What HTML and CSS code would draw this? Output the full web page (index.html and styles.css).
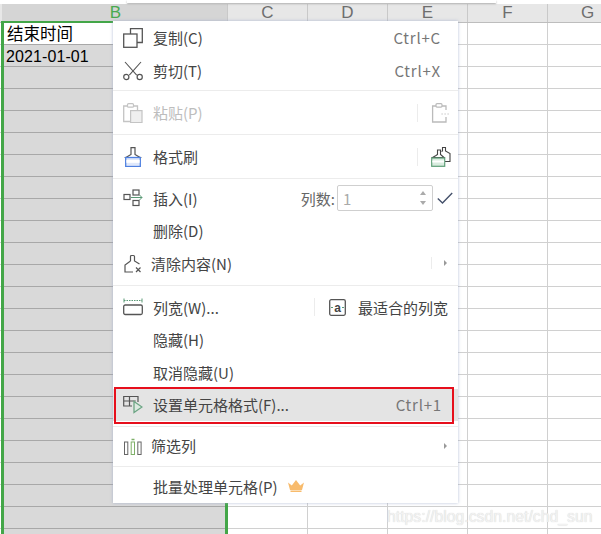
FILE: index.html
```html
<!DOCTYPE html>
<html lang="zh-CN">
<head>
<meta charset="utf-8">
<title>Sheet</title>
<link rel="stylesheet" href="styles.css">
</head>
<body>
<div class="app">
  <div class="topbar"><div class="dialog-edge"></div></div>
  <div class="headers">
    <div class="hd hd-a"></div>
    <div class="hd hd-b">B</div>
    <div class="hd">C</div>
    <div class="hd">D</div>
    <div class="hd">E</div>
    <div class="hd">F</div>
    <div class="hd">G</div>
  </div>
  <div class="sheet">
    <div class="col col-a"></div>
    <div class="col col-b">
      <div class="cell cell-head">结束时间</div>
      <div class="cell cell-date">2021-01-01</div>
    </div>
    <div class="col"></div>
    <div class="col"></div>
    <div class="col"></div>
    <div class="col"></div>
    <div class="col"></div>
  </div>

  <div class="menu">
    <div class="group g1">
      <div class="item">
        <svg class="icon" viewBox="0 0 20 20"><path d="M7.500 6V.7h11.800v13.800H14" fill="none" stroke="#555" stroke-width="1.300"/><rect x=".7" y="6" width="13.300" height="13.300" fill="#fff" stroke="#555" stroke-width="1.300"/></svg>
        <span class="label">复制(C)</span><span class="key">Ctrl+C</span>
      </div>
      <div class="item">
        <svg class="icon" viewBox="0 0 20 20"><path d="M2 1l11.700 13.200M18 1L6.300 14.200" fill="none" stroke="#555" stroke-width="1.100"/><circle cx="3.300" cy="16" r="2.600" fill="none" stroke="#555" stroke-width="1.200"/><circle cx="16.700" cy="16" r="2.600" fill="none" stroke="#555" stroke-width="1.200"/></svg>
        <span class="label">剪切(T)</span><span class="key">Ctrl+X</span>
      </div>
    </div>
    <div class="group g2">
      <div class="item">
        <svg class="icon" viewBox="0 0 20 20"><path d="M5 3H.7v15.500H7" fill="none" stroke="#c4c4c4" stroke-width="1.300"/><path d="M11 3h3.500v4" fill="none" stroke="#c4c4c4" stroke-width="1.300"/><rect x="4.500" y=".7" width="6" height="3.500" rx="1" fill="#fff" stroke="#c4c4c4" stroke-width="1.200"/><rect x="7.600" y="7.600" width="11.400" height="12" fill="#efefef" stroke="#c4c4c4" stroke-width="1.200"/></svg>
        <span class="label off">粘贴(P)</span>
        <span class="divider paste-div"></span>
        <svg class="icon-r" viewBox="0 0 20 20"><path d="M5 3H1.600v16H15v-5" fill="none" stroke="#bbb" stroke-width="1.300"/><path d="M11 3h4v4" fill="none" stroke="#bbb" stroke-width="1.300"/><rect x="5" y=".7" width="6" height="3.400" rx="1" fill="#fff" stroke="#bbb" stroke-width="1.200"/><path d="M10.500 11h1.200m1.800 0h1.200m1.800 0h1.200" stroke="#bbb" stroke-width="1.200"/></svg>
      </div>
    </div>
    <div class="group g3">
      <div class="item">
        <svg class="icon" viewBox="0 0 20 20"><path d="M8 .7h4v6.800l5 3H3l5-3z" fill="#fff" stroke="#555" stroke-width="1.200"/><rect x="2.700" y="10.500" width="14.600" height="9" fill="#dfe8fb" stroke="#4f80e0" stroke-width="1.300"/><rect x="3.400" y="13" width="13.200" height="2.800" fill="#fff"/></svg>
        <span class="label">格式刷</span>
        <span class="divider paste-div"></span>
        <svg class="icon-r" viewBox="0 0 20 20"><path d="M10.500 4.500l1-.5V.5h3v3.500l4.500 2.500v8h-5" fill="none" stroke="#444" stroke-width="1.100"/><path d="M5 8.500l1.500-1V3h3v4.500l3.500 3H1.500z" fill="#fff" stroke="#444" stroke-width="1.100"/><rect x=".7" y="11" width="13" height="8.300" fill="#d9ecdf" stroke="#5f9f78" stroke-width="1.200"/><rect x="1.300" y="13.500" width="11.800" height="2" fill="#fff"/></svg>
      </div>
    </div>
    <div class="group g4">
      <div class="item short">
        <svg class="icon" viewBox="0 0 20 20"><rect x="1" y="6.500" width="6" height="5" fill="none" stroke="#555" stroke-width="1.200"/><rect x="10" y="2" width="6" height="5" fill="none" stroke="#555" stroke-width="1.200"/><rect x="10" y="12.500" width="6" height="5" fill="none" stroke="#555" stroke-width="1.200"/><path d="M8 9.500h11M16.500 7l2.500 2.500-2.500 2.500" fill="none" stroke="#5a9a76" stroke-width="1"/></svg>
        <span class="label">插入(I)</span>
        <span class="count-label">列数:</span>
        <span class="spin">
          <span class="spin-val">1</span>
          <span class="spin-arrows"><i class="up"></i><i class="down"></i></span>
        </span>
        <svg class="check" viewBox="0 0 16 12"><path d="M.8 6.500l4.700 4.500L15.200 1" fill="none" stroke="#44506a" stroke-width="1.400"/></svg>
      </div>
      <div class="item short"><span class="icon"></span><span class="label">删除(D)</span></div>
      <div class="item short">
        <svg class="icon" viewBox="0 0 20 20"><path d="M7.500 8V3.500a1 1 0 0 1 1-1h2a1 1 0 0 1 1 1v4.500l5 3M7.500 8L2 12v7h8" fill="none" stroke="#555" stroke-width="1.200"/><path d="M13 14.500l4.500 4.500m0-4.500L13 19" stroke="#555" stroke-width="1.200"/></svg>
        <span class="label tight">清除内容(N)</span>
        <span class="divider more-div"></span>
        <i class="more"></i>
      </div>
    </div>
    <div class="group g5">
      <div class="item short">
        <svg class="icon" viewBox="0 0 20 20"><path d="M1 1.500v4M19 1.500v4" stroke="#5a9a76" stroke-width="1"/><path d="M1 3.500h18" stroke="#5a9a76" stroke-width="1" stroke-dasharray="1.500 1"/><rect x=".7" y="8" width="18.600" height="9.500" rx="1.500" fill="none" stroke="#555" stroke-width="1.300"/></svg>
        <span class="label">列宽(W)...</span>
        <span class="divider fit-div"></span>
        <svg class="fit-icon" viewBox="0 0 17 17"><rect x=".7" y=".7" width="15.600" height="15.600" rx="1.500" fill="none" stroke="#555" stroke-width="1.300"/><path d="M2 8.500h2M13 8.500h2" stroke="#5a9a76" stroke-width="1"/><text class="fit-a" x="8.500" y="12.500" text-anchor="middle">a</text></svg>
        <span class="fit-label">最适合的列宽</span>
      </div>
      <div class="item short"><span class="icon"></span><span class="label">隐藏(H)</span></div>
      <div class="item short"><span class="icon"></span><span class="label">取消隐藏(U)</span></div>
      <div class="item short active">
        <svg class="icon" viewBox="0 0 20 20"><path d="M15 7V1.500H.7v9.500H9M6.500 1.500V11M.7 6h12" fill="none" stroke="#555" stroke-width="1.200"/><path d="M11 6.500l8 5.500-8 5.500z" fill="#dce9e0" stroke="#6ca584" stroke-width="1.300"/></svg>
        <span class="label">设置单元格格式(F)...</span><span class="key key-last">Ctrl+1</span>
      </div>
    </div>
    <div class="group g6">
      <div class="item">
        <svg class="icon" viewBox="0 0 20 20"><rect x="1.500" y="6" width="3.300" height="12.500" fill="none" stroke="#666" stroke-width="1"/><rect x="8.200" y="6" width="3.300" height="12.500" fill="none" stroke="#7fb069" stroke-width="1"/><rect x="14.800" y="6" width="3.300" height="12.500" fill="none" stroke="#666" stroke-width="1"/><path d="M8.500 3.500h3" stroke="#7fb069" stroke-width="1.500"/></svg>
        <span class="label tight">筛选列</span>
        <i class="more filter-more"></i>
      </div>
    </div>
    <div class="group g7">
      <div class="item">
        <span class="icon"></span><span class="label">批量处理单元格(P)</span>
        <svg class="crown" viewBox="0 0 16 12"><path d="M0 2.500l3.800 3L8 0l4.200 5.500 3.800-3L14 10H2z" fill="#f8bb6c"/><rect x="2.500" y="10.500" width="11" height="1.500" fill="#f8bb6c"/></svg>
      </div>
    </div>
  </div>

  <div class="redbox"></div>
  <div class="watermark">https://blog.csdn.net/chd_sun</div>
</div>
</body>
</html>
```
FILE: styles.css
```css
* { box-sizing: border-box; }
html, body { margin: 0; padding: 0; background: #fff; }
.app {
  position: relative;
  width: 601px;
  height: 534px;
  overflow: hidden;
  background: #fff;
  font-family: "Noto Sans CJK SC", "Liberation Sans", sans-serif;
}
.topbar { height: 4px; background: #fff; position: relative; padding-left: 127px; }
.dialog-edge {
  width: 369px;
  height: 3px;
  background: #fff;
  box-shadow: 0 1px 2px #aaa;
}
.headers {
  display: flex;
  height: 19px;
  background: #e7e7e7;
  border-bottom: 1px solid #bdbdbd;
}
.hd {
  flex: 0 0 80px;
  border-right: 1px solid #c9c9c9;
  text-align: center;
  font: 17px/17px "Liberation Sans", sans-serif;
  color: #6e6e6e;
}
.hd-a { flex-basis: 2px; border-right: 0; }
.hd-b { flex-basis: 226px; background: #d5d5d5; color: #4aaa50; padding-left: 2px; }
.sheet { display: flex; height: 511px; }
.col {
  flex: 0 0 80px;
  border-right: 1px solid #d0d0d0;
  background-image: linear-gradient(to bottom, transparent 21px, #d0d0d0 21px);
  background-size: 100% 22px;
}
.col-a { flex-basis: 1px; border-right: 0; }
.col-b {
  flex-basis: 227px;
  margin-top: -2px;
  height: 513px;
  border: solid #43a648;
  border-width: 2px 3px 0 3px;
  background-color: #d9d9d9;
  background-image: linear-gradient(to bottom, transparent 21px, #a8a8a8 21px);
}
.cell {
  height: 22px;
  padding-left: 2px;
  color: #000;
  white-space: nowrap;
}
.cell-head {
  background: #fff;
  border-bottom: 1px solid #a8a8a8;
  padding-left: 3px;
  font: 16.500px/21px "Noto Sans CJK SC", sans-serif;
}
.cell-date { font: 16px/23px "Liberation Sans", sans-serif; letter-spacing: .1px; }

.menu {
  position: absolute;
  left: 113px;
  top: 21px;
  width: 345px;
  height: 482px;
  background: #fff;
  box-shadow: 0 0 3px rgba(150, 165, 200, .7);
  color: #444;
  font-size: 15px;
}
.group { border-bottom: 1px solid #ececec; }
.g1 { padding: 0 0 3px; }
.g2 { padding: 5px 0; }
.g3 { padding: 5px 0; }
.g4 { padding: 3px 0 5.500px; }
.g5 { padding: 5px 0; }
.g6 { padding: 2px 0 4px; }
.g7 { padding: 3px 0 0; border-bottom: 0; }
.item {
  position: relative;
  display: flex;
  align-items: center;
  height: 33px;
  padding-left: 10px;
}
.item.short { height: 32.500px; }
.icon { flex: 0 0 20px; width: 20px; height: 20px; margin-right: 10px; }
.label { white-space: nowrap; }
.label.tight { margin-left: -2px; }
.label.off { color: #bdbdbd; }
.key {
  margin-left: auto;
  margin-right: 17px;
  color: #777;
  letter-spacing: .8px;
}
.key-last { margin-right: 16px; }
.divider { width: 1px; height: 18px; background: #ececec; }
.paste-div { margin-left: auto; margin-right: 13px; }
.icon-r { width: 20px; height: 20px; margin-right: 7px; }
.count-label { margin-left: auto; margin-right: 2px; color: #666; }
.spin {
  display: flex;
  align-items: center;
  justify-content: space-between;
  width: 96px;
  height: 26px;
  border: 1px solid #cfcfcf;
  border-radius: 2px;
  padding: 0 6px 0 5px;
  color: #aaa;
}
.spin-arrows { display: flex; flex-direction: column; gap: 6px; }
.spin-arrows i { display: block; width: 0; height: 0; border: 3.500px solid transparent; }
.spin-arrows .up { border-top: 0; border-bottom: 4px solid #aaa; }
.spin-arrows .down { border-bottom: 0; border-top: 4px solid #aaa; }
.check { width: 16px; height: 12px; margin: 0 5px 0 4px; }
.more-div { margin-left: auto; margin-right: 12px; height: 12px; }
.more {
  display: block;
  width: 0;
  height: 0;
  border: 3px solid transparent;
  border-left: 3px solid #999;
  border-right: 0;
  margin-right: 11px;
}
.filter-more { margin-left: auto; }
.fit-div { margin-left: 95px; margin-right: 14px; }
.fit-icon { width: 17px; height: 17px; flex: none; }
.fit-a { font: 700 12px "Liberation Sans", sans-serif; fill: #444; }
.fit-label { margin-left: auto; margin-right: 10px; white-space: nowrap; }
.item.active { background: #e4e4e4; }
.crown { width: 16px; height: 12px; margin: -2px 0 0 10px; }

.redbox {
  position: absolute;
  left: 114px;
  top: 387px;
  width: 340px;
  height: 37px;
  border: 2px solid #e60f1c;
}
.watermark {
  position: absolute;
  left: 387px;
  top: 508px;
  font: 15.800px/18px "Liberation Sans", sans-serif;
  color: #f2f2f2;
  text-shadow: 0 0 1px #ccc;
  white-space: nowrap;
}
```
